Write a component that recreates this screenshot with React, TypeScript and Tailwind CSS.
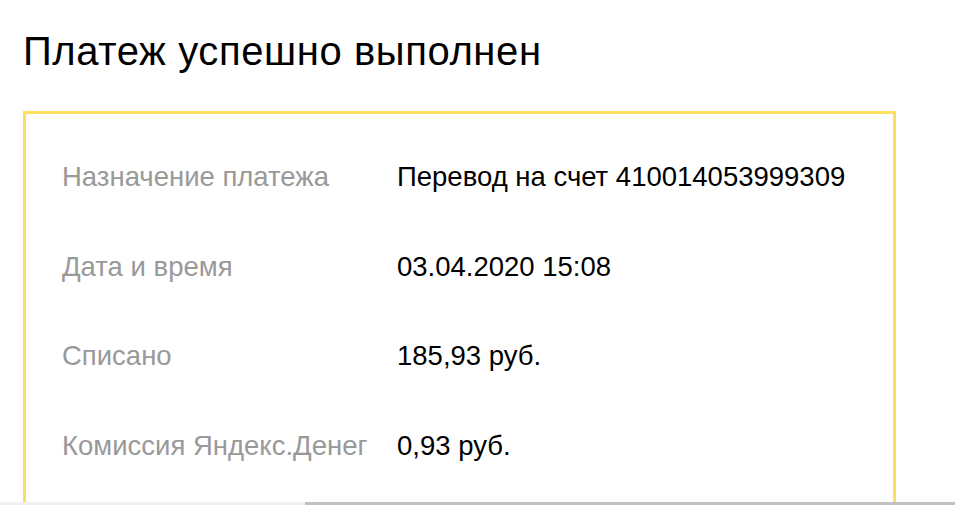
import React from 'react';

const ROWS = [
  { label: 'Назначение платежа', value: 'Перевод на счет 410014053999309' },
  { label: 'Дата и время', value: '03.04.2020 15:08' },
  { label: 'Списано', value: '185,93 руб.' },
  { label: 'Комиссия Яндекс.Денег', value: '0,93 руб.' },
];

export default function App() {
  return (
    <div className="h-[505px] w-[955px] flex flex-col bg-white overflow-hidden font-['Liberation_Sans',Arial,sans-serif]">
      <div className="flex-1 overflow-hidden pl-[23px] pt-[27px]">
        <h1 className="text-[40px] leading-[48px] tracking-[0.6px] text-black font-normal">Платеж успешно выполнен</h1>
        <div className="mt-[36px] w-[873px] h-[500px] border-[3px] border-b-0 border-[#fddf5f] pt-[18px] pl-[36px]">
          {ROWS.map(row => (
            <div key={row.label} className="flex items-center h-[89.5px] text-[27.5px]">
              <span className="w-[335px] text-[#999999]">{row.label}</span>
              <span className="text-black">{row.value}</span>
            </div>
          ))}
        </div>
      </div>
      <div className="flex h-[3px] shrink-0">
        <div className="w-[305px] bg-[#f0f0f0]" />
        <div className="flex-1 bg-[#c1c1c1]" />
      </div>
    </div>
  );
}
